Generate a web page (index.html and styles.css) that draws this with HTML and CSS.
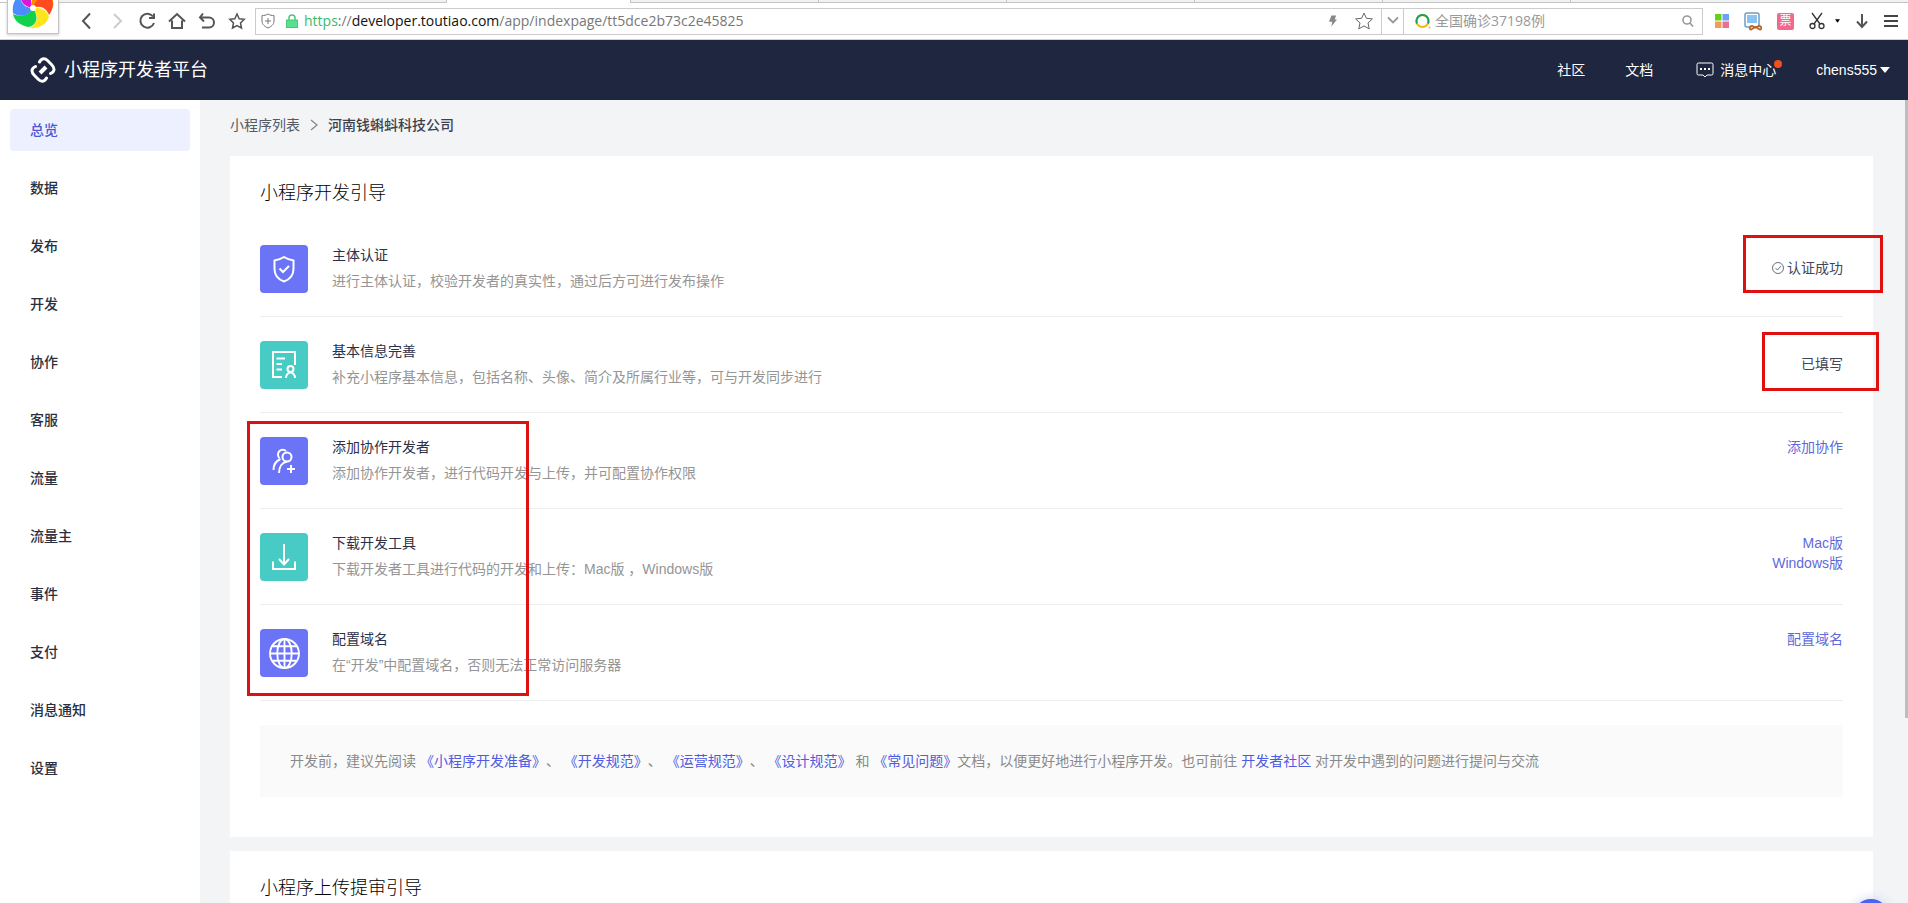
FILE: index.html
```html
<!DOCTYPE html>
<html lang="zh-CN">
<head>
<meta charset="utf-8">
<meta name="viewport" content="width=device-width, initial-scale=1">
<title>小程序开发者平台</title>
<link rel="stylesheet" href="styles.css">
</head>
<body>
<div class="browser">
  <div class="tab-strip"><span class="tab-edge"></span><span class="tab tab-wide"></span><span class="tab tab-active"></span><span class="tab"></span><span class="tab"></span><span class="tab"></span><span class="tab"></span><span class="tab"></span><span class="tab tab-rest"></span></div>
  <div class="toolbar">
    <div class="browser-logo">
      <svg viewBox="0 0 42 42" width="42" height="42" aria-hidden="true">
        <path fill="#ff8a00" d="M21 21C16 12 25 3 34 6c7 3 9 10 6 16-4-6-11-7-19-1z"/>
        <path fill="#ff4b1f" d="M21 21c2-9 9-12 19-8 2 6 0 11-3 15-3-7-8-10-16-7z"/>
        <path fill="#ffe51a" d="M21 21c9-1 15 4 16 9-3 8-11 12-19 11 8-4 9-12 3-20z"/>
        <path fill="#12d24c" d="M21 21c6 9 4 17-4 19C9 39 2 34 1 27c8 3 15 2 20-6z"/>
        <path fill="#4b8cff" d="M21 21c-4 8-13 10-20 5-1-7 1-14 7-18 0 8 5 13 13 13z"/>
        <path fill="#d817d8" d="M21 21C12 20 7 14 9 6c4-4 10-6 17-4-7 4-9 11-5 19z"/>
        <circle cx="21" cy="21" r="3" fill="#fff"/>
      </svg>
    </div>
    <div class="nav-buttons">
      <button class="icon-btn" aria-label="后退"><svg viewBox="0 0 20 20"><path d="M13 2.500 6 10l7 7.500"/></svg></button>
      <button class="icon-btn is-off" aria-label="前进"><svg viewBox="0 0 20 20"><path d="M7 3l7 7-7 7"/></svg></button>
      <button class="icon-btn" aria-label="刷新"><svg viewBox="0 0 20 20"><path d="M16 5.500A7 7 0 1 0 17 12M17 2.500V7h-5"/></svg></button>
      <button class="icon-btn" aria-label="主页"><svg viewBox="0 0 20 20"><path d="M2 10.500 10 3l8 7.500M5 9.500V17h10V9.500"/></svg></button>
      <button class="icon-btn" aria-label="撤销"><svg viewBox="0 0 20 20"><path d="M6 2.500 3 6.500l4 4M3.500 6.500H12a5 5 0 0 1 0 10H5"/></svg></button>
      <button class="icon-btn thin" aria-label="收藏"><svg viewBox="0 0 20 20"><path d="m10 3 2.200 4.700 5 .6-3.700 3.600 1 5.100-4.500-2.500L5.500 17l1-5.100L2.800 8.300l5-.6z"/></svg></button>
    </div>
    <div class="address">
      <svg class="shield" viewBox="0 0 14 16" width="14" height="16" aria-hidden="true"><path d="M7 1c2 1.200 4 1.600 6 1.600V8c0 3.500-3 5.800-6 7-3-1.200-6-3.500-6-7V2.600C3 2.600 5 2.200 7 1zM7 5v6M4 8h6"/></svg>
      <svg viewBox="0 0 12 14" width="12" height="14" aria-hidden="true"><path d="M3 7V4a3 3 0 0 1 6 0v3" fill="none" stroke="#4cc77a" stroke-width="1.500"/><rect x="0.500" y="6" width="11" height="7.500" fill="#5ae08c" stroke="#4cc77a"/></svg>
      <p class="url"><span class="scheme">https</span>://<span class="host">developer.toutiao.com</span>/app/indexpage/tt5dce2b73c2e45825</p>
      <svg viewBox="0 0 10 14" width="8" height="14" aria-hidden="true"><path fill="#888" d="M3 0h6L7 5h3L3 14l1-6H0z"/></svg>
      <svg class="fav" viewBox="0 0 20 20" width="20" height="20" aria-hidden="true"><path d="m10 2 2.400 5.300 6 .6-4.400 4 1.200 6-5.200-3-5.200 3 1.200-6-4.400-4 6-.6z"/></svg>
    </div>
    <button class="drop" aria-label="展开"><svg viewBox="0 0 12 12" width="12" height="12"><path d="m1 3.500 5 5 5-5"/></svg></button>
    <div class="search">
      <svg viewBox="0 0 16 16" width="16" height="16" aria-hidden="true"><circle cx="7.500" cy="8" r="6" fill="none" stroke="#f0b90b" stroke-width="2"/><path d="M2 10.500A6 6 0 1 1 13 10.500" fill="none" stroke="#1aa35a" stroke-width="2"/><circle cx="14.500" cy="14.500" r="1" fill="#f0b90b"/></svg>
      <input class="search-input" type="text" aria-label="搜索" placeholder="全国确诊37198例">
      <svg viewBox="0 0 12 12" width="12" height="12" aria-hidden="true"><path d="M5 1a4 4 0 1 0 0 8 4 4 0 0 0 0-8zM8 8l3 3.500" fill="none" stroke="#999" stroke-width="1.600"/></svg>
    </div>
    <div class="extensions">
      <svg viewBox="0 0 14 14" width="14" height="14" aria-hidden="true"><path fill="#66d11a" d="M0 0h6.500v6.500H0z"/><path fill="#6ea0f8" d="M7.500 0H14v6.500H7.500z"/><path fill="#f59a5a" d="M0 7.500h6.500V14H0z"/><path fill="#e9728a" d="M7.500 7.500H14V14H7.500z"/></svg>
      <svg viewBox="0 0 18 20" width="18" height="20" aria-hidden="true"><rect x="1" y="2" width="14" height="14" rx="2" fill="#fff" stroke="#6d9cc4" stroke-width="1.500"/><path fill="#8cc2f2" d="M3 4h10v8H3z"/><path d="M7 18.500c-2 0-1.500-3.500 1-3.500l3.500 1.500L15 15c3 0 3 3.500 1 3.500L11.500 16z" fill="#fff" stroke="#b5682a" stroke-width="1.800"/></svg>
      <span class="ticket">票</span>
      <span class="cut">
        <svg viewBox="0 0 16 18" width="16" height="18" aria-hidden="true"><path d="m3 1 8 11M13 1 5 12" stroke="#333" stroke-width="1.300"/><circle cx="3.500" cy="14" r="2.500" fill="none" stroke="#333" stroke-width="1.300"/><circle cx="12.500" cy="14" r="2.500" fill="none" stroke="#333" stroke-width="1.300"/></svg>
        <svg viewBox="0 0 6 4" width="5" height="4" aria-hidden="true"><path d="M0 0h6L3 4z"/></svg>
      </span>
      <svg viewBox="0 0 14 16" width="14" height="16" aria-hidden="true"><path d="M7 1v13M2 8.500l5 5.500 5-5.500" fill="none" stroke="#555" stroke-width="2"/></svg>
      <svg viewBox="0 0 14 14" width="14" height="14" aria-hidden="true"><path d="M0 2h14M0 7h14M0 12h14" stroke="#444" stroke-width="1.800"/></svg>
    </div>
  </div>
</div>

<header class="header">
  <a class="brand" href="#">
    <svg viewBox="0 0 26 26" width="26" height="26" aria-hidden="true"><g fill="none" stroke="#fff" stroke-width="3" stroke-linecap="round" stroke-linejoin="round"><path d="M9.500 5C11.500 1 15 1 17.500 3.500L21.500 7.500C25 11 25 14.500 20.500 16.500"/><path d="M5.500 9.500C1 11.500 1 15 4.500 18.500L8.500 22.500C11 25 14.500 25 16.500 21"/></g><path d="m10 16 6-6" stroke="#fff" stroke-width="4"/></svg>
    <span>小程序开发者平台</span>
  </a>
  <nav class="header-nav">
    <a href="#">社区</a>
    <a href="#">文档</a>
    <a class="messages" href="#">
      <svg viewBox="0 0 18 16" width="18" height="16" aria-hidden="true"><path d="M2.500 1h13A1.500 1.500 0 0 1 17 2.500v9a1.500 1.500 0 0 1-1.500 1.500H11l-2 2-2-2H2.500A1.500 1.500 0 0 1 1 11.500v-9A1.500 1.500 0 0 1 2.500 1z" fill="none" stroke="#fff"/><path d="M4 6h2v2H4zM8 6h2v2H8zM12 6h2v2h-2z" fill="#fff"/></svg>
      消息中心<span class="dot"></span>
    </a>
    <button class="user">chens555<svg viewBox="0 0 10 6" width="10" height="6" aria-hidden="true"><path fill="#fff" d="M0 0h10L5 6z"/></svg></button>
  </nav>
</header>

<div class="layout">
  <nav class="sidebar">
    <a class="side-item is-active" href="#">总览</a>
    <a class="side-item" href="#">数据</a>
    <a class="side-item" href="#">发布</a>
    <a class="side-item" href="#">开发</a>
    <a class="side-item" href="#">协作</a>
    <a class="side-item" href="#">客服</a>
    <a class="side-item" href="#">流量</a>
    <a class="side-item" href="#">流量主</a>
    <a class="side-item" href="#">事件</a>
    <a class="side-item" href="#">支付</a>
    <a class="side-item" href="#">消息通知</a>
    <a class="side-item" href="#">设置</a>
  </nav>
  <main class="main">
    <div class="crumbs">
      <a href="#">小程序列表</a>
      <svg viewBox="0 0 8 12" width="8" height="12" aria-hidden="true"><path d="m1 1 6 5-6 5" fill="none" stroke="#888" stroke-width="1.300"/></svg>
      <strong>河南钱蝌蚪科技公司</strong>
    </div>

    <section class="card">
      <h2 class="card-title">小程序开发引导</h2>
      <ul class="steps">
        <li class="step">
          <span class="step-icon violet"><svg viewBox="0 0 28 28"><path d="M14 2c3 2 6 3 9.500 3.500V14c0 7-4 10.500-9.500 12.500C8.500 24.500 4.500 21 4.500 14V5.500C8 5 11 4 14 2z"/><path d="m9.500 13.500 3.500 3.500 6-6"/></svg></span>
          <div class="step-text"><h3>主体认证</h3><p>进行主体认证，校验开发者的真实性，通过后方可进行发布操作</p></div>
          <div class="step-state marked mark-a"><svg viewBox="0 0 12 12" width="12" height="12" aria-hidden="true"><path d="M6 .5a5.500 5.500 0 1 0 0 11 5.500 5.500 0 0 0 0-11zM3.500 6l2 2 3.500-4" fill="none" stroke="#444b63" stroke-width=".8"/></svg>认证成功</div>
        </li>
        <li class="step">
          <span class="step-icon teal"><svg viewBox="0 0 28 28"><path d="M12 26H3V1h22v13M6.500 7.500H15M6.500 13H12M6.500 18.500H12"/><circle cx="20.500" cy="18" r="3"/><path d="M16 27c0-3 2-5.500 4.500-5.500S25 24 25 27"/></svg></span>
          <div class="step-text"><h3>基本信息完善</h3><p>补充小程序基本信息，包括名称、头像、简介及所属行业等，可与开发同步进行</p></div>
          <div class="step-state marked mark-b">已填写</div>
        </li>
        <li class="step marked mark-c">
          <span class="step-icon violet"><svg viewBox="0 0 28 28"><path d="M9.500 11A4.500 4.500 0 1 1 16 4M3.500 23c0-5 2.500-9 7-11"/><circle cx="17" cy="10" r="4.500"/><path d="M9 26c0-6 3-10.500 8-11.500M21 18v8M17 22h8"/></svg></span>
          <div class="step-text"><h3>添加协作开发者</h3><p>添加协作开发者，进行代码开发与上传，并可配置协作权限</p></div>
          <div class="step-links"><a href="#">添加协作</a></div>
        </li>
        <li class="step">
          <span class="step-icon teal"><svg viewBox="0 0 28 28"><path d="M14 1v20M9 16l5 5.500 5-5.500M3 18.500V26h22v-7.500"/></svg></span>
          <div class="step-text"><h3>下载开发工具</h3><p>下载开发者工具进行代码的开发和上传：Mac版 ，Windows版</p></div>
          <div class="step-links"><a href="#">Mac版</a><a href="#">Windows版</a></div>
        </li>
        <li class="step">
          <span class="step-icon violet globe"><svg viewBox="0 0 30 30"><circle cx="15" cy="15" r="14"/><ellipse cx="15" cy="15" rx="7" ry="14"/><path d="M15 1v28M1 15h28M3.500 8h23M3.500 22h23"/></svg></span>
          <div class="step-text"><h3>配置域名</h3><p>在“开发”中配置域名，否则无法正常访问服务器</p></div>
          <div class="step-links"><a href="#">配置域名</a></div>
        </li>
      </ul>
      <p class="note">开发前，建议先阅读 <a href="#">《小程序开发准备》</a>、 <a href="#">《开发规范》</a>、 <a href="#">《运营规范》</a>、 <a href="#">《设计规范》</a> 和 <a href="#">《常见问题》</a>文档，以便更好地进行小程序开发。也可前往 <a href="#">开发者社区</a> 对开发中遇到的问题进行提问与交流</p>
    </section>

    <section class="card">
      <h2 class="card-title">小程序上传提审引导</h2>
    </section>
  </main>
</div>
<div class="scroll-thumb"></div>
<button class="help" aria-label="帮助"></button>
</body>
</html>
```

FILE: styles.css
```css
*, ::before, ::after { box-sizing: border-box; }
body {
  margin: 0;
  height: 100vh;
  overflow: hidden;
  display: flex;
  flex-direction: column;
  background: #f3f4f6;
  color: #2b2f3d;
  font: 14px/20px "Liberation Sans", "Noto Sans CJK SC", sans-serif;
}
a { color: inherit; text-decoration: none; }
button { border: 0; padding: 0; background: none; color: inherit; font: inherit; }
h2, h3, p, ul { margin: 0; padding: 0; font-weight: 400; }
svg { flex: none; }

/* Browser bar */
.browser { flex: none; height: 40px; background: #fff; border-bottom: 1px solid #ccd3d6; }
.tab-strip { display: flex; height: 3px; }
.tab { width: 188px; background: #f2f2f2; border: 1px solid #c4c4c4; border-width: 0 1px 1px 0; }
.tab-edge { width: 8px; border-bottom: 1px solid #c4c4c4; }
.tab-wide, .tab-rest { flex: none; }
.tab-wide { width: 439px; }
.tab-active { width: 184px; background: #fff; border-bottom: 0; }
.tab-rest { flex: 1; border-right: 0; }
.toolbar { display: flex; align-items: center; height: 36px; padding-right: 10px; }
.browser-logo {
  position: absolute;
  left: 7px;
  top: 0;
  width: 52px;
  height: 34px;
  overflow: hidden;
  display: flex;
  align-items: flex-end;
  justify-content: center;
  padding-bottom: 4px;
  background: #fff;
  border: 1px solid #c4c4c4;
  border-top: 0;
  box-shadow: 0 1px 3px #ccc;
}
.nav-buttons { display: flex; gap: 10px; margin-left: 77px; padding-right: 8px; }
.icon-btn { width: 20px; height: 20px; }
.icon-btn svg { display: block; width: 20px; height: 20px; fill: none; stroke: #555; stroke-width: 2; }
.icon-btn.thin svg { stroke-width: 1.5; }
.icon-btn.is-off svg { stroke: #ccc; }
.address {
  flex: 1;
  display: flex;
  align-items: center;
  height: 27px;
  padding: 0 7px 0 5px;
  border: 1px solid #ccc;
}
.shield { margin-right: 11px; fill: none; stroke: #777; }
.url { flex: 1; margin-left: 6px; color: #777; font: 14px/24px "Open Sans", "Noto Sans", sans-serif; }
.scheme { color: #3cb96b; }
.host { color: #111; }
.fav { margin-left: 17px; fill: none; stroke: #666; }
.drop { width: 21px; height: 27px; border: 1px solid #ccc; border-width: 1px 0; }
.drop path { fill: none; stroke: #999; stroke-width: 1.8; }
.search {
  display: flex;
  align-items: center;
  width: 300px;
  height: 27px;
  padding: 0 8px 0 11px;
  border: 1px solid #ccc;
}
.search-input {
  flex: 1;
  min-width: 0;
  border: 0;
  padding: 0 4px;
  outline: 0;
  font: 14px/20px "Open Sans", "Noto Sans CJK SC", sans-serif;
}
.search-input::placeholder { color: #999; }
.extensions { display: flex; align-items: center; justify-content: space-between; width: 183px; margin-left: 12px; }
.cut { display: flex; align-items: center; gap: 10px; }
.ticket {
  width: 17px;
  height: 17px;
  border-radius: 2px;
  background: #f4688c;
  color: #fff;
  font-size: 12px;
  line-height: 17px;
  text-align: center;
}

/* Site header */
.header {
  flex: none;
  display: flex;
  align-items: center;
  justify-content: space-between;
  height: 60px;
  padding: 0 18px 0 30px;
  background: #1f2640;
  color: #fff;
}
.brand { display: flex; align-items: center; gap: 8px; font-size: 18px; }
.header-nav { display: flex; align-items: center; gap: 40px; }
.messages { position: relative; display: flex; align-items: center; gap: 6px; margin: 0 -6px 0 3px; }
.dot { position: absolute; right: 0; top: 0; width: 8px; height: 8px; border-radius: 50%; background: #f0501e; }
.user { display: flex; align-items: center; gap: 3px; }

/* Page frame */
.layout { flex: 1; min-height: 0; display: flex; }
.sidebar { flex: none; display: flex; flex-direction: column; gap: 16px; width: 200px; padding: 9px 10px; background: #fff; }
.side-item { flex: none; padding: 11px 20px; border-radius: 4px; font-weight: 500; }
.side-item.is-active { background: #edf1ff; color: #4f58d6; }
.main { flex: 1; min-width: 0; padding: 15px 35px 0 30px; }
.crumbs { display: flex; align-items: center; gap: 10px; padding-bottom: 21px; color: #555a66; }
.crumbs strong { color: #3c414e; font-weight: 500; }

/* Cards */
.card { margin-bottom: 14px; padding: 24px 30px 40px; background: #fff; }
.card-title { font-size: 18px; font-weight: 300; line-height: 26px; color: #000; }
.steps { list-style: none; padding-top: 15px; }
.step { position: relative; display: flex; height: 96px; padding-top: 24px; border-bottom: 1px solid #eee; }
.step-icon { flex: none; display: flex; align-items: center; justify-content: center; width: 48px; height: 48px; border-radius: 4px; }
.step-icon svg { width: 28px; height: 28px; fill: none; stroke: #fff; stroke-width: 2; }
.globe svg { width: 31px; height: 31px; stroke-width: 1.8; }
.violet { background: #6b73f7; }
.teal { background: #49cbc5; }
.step-text { flex: 1; margin-left: 24px; }
.step-text h3 { font-size: 14px; line-height: 20px; color: #2c3048; }
.step-text p { margin-top: 6px; color: #959595; }
.step-state { position: relative; display: flex; align-items: center; align-self: flex-start; gap: 3px; height: 46px; color: #41465a; }
.step-links { display: flex; flex-direction: column; align-items: flex-end; color: #5f69dc; }
.note { margin-top: 24px; padding: 26px 30px; background: #fafafa; color: #8a8a8a; text-spacing-trim: space-all; }
.note a { color: #4f5be0; }

/* Red attention frames */
.marked::after { content: ""; position: absolute; z-index: 1; border: 3px solid #e01010; pointer-events: none; }
.mark-a::after { inset: -10px -40px -2px -29px; }
.mark-b::after { inset: -9px -36px -4px -39px; }
.mark-c::after { left: -13px; top: 8px; width: 282px; height: 275px; }

.scroll-thumb { position: fixed; right: 0; top: 100px; width: 3px; height: 618px; background: #bdbdbd; }
.help { position: fixed; right: 19px; bottom: -32px; width: 36px; height: 36px; border-radius: 50%; background: #4a63f0; box-shadow: 0 0 12px #ccd2f0; }
```
